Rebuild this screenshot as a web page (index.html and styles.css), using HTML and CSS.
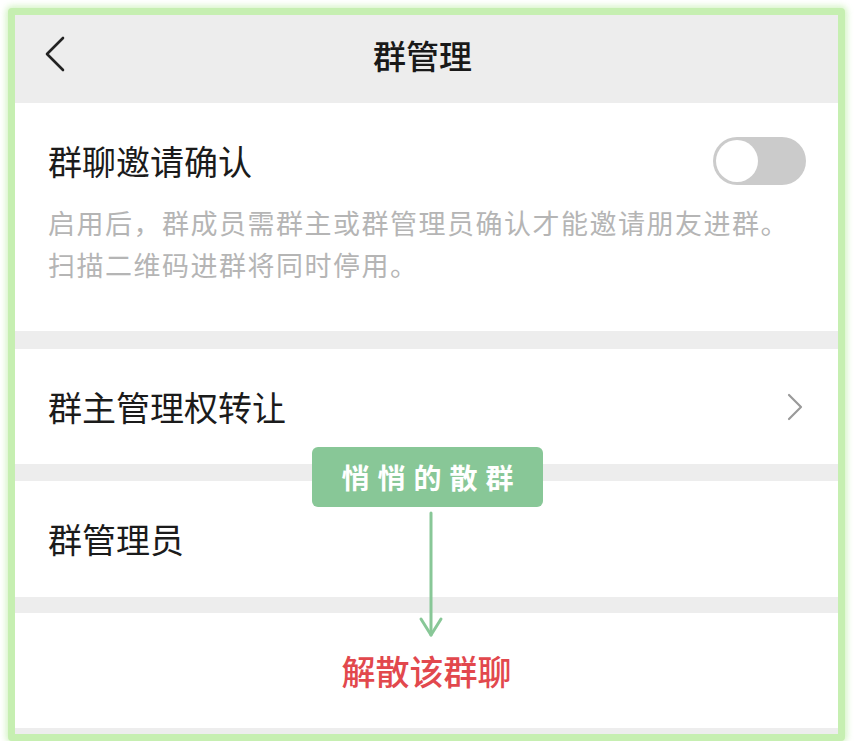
FILE: index.html
```html
<!DOCTYPE html>
<html lang="zh-CN">
<head>
    <meta charset="UTF-8">
    <meta name="viewport" content="width=device-width, initial-scale=1.0">
    <title>群管理</title>
    <link rel="stylesheet" href="styles.css">
</head>
<body>
    <div class="frame">
        <div class="header">
            <svg class="back" width="22" height="36" viewBox="0 0 22 36">
                <path d="M19 2 L3 18 L19 34" fill="none" stroke="#222" stroke-width="2.6" stroke-linecap="round" stroke-linejoin="round"/>
            </svg>
            <h1>群管理</h1>
        </div>

        <div class="section">
            <div class="switch-row">
                <span class="label">群聊邀请确认</span>
                <div class="toggle"><div class="knob"></div></div>
            </div>
            <p class="desc">启用后，群成员需群主或群管理员确认才能邀请朋友进群。<br>扫描二维码进群将同时停用。</p>
        </div>

        <div class="gap gap-1"></div>
        <div class="row">
            <span class="label">群主管理权转让</span>
            <svg class="chevron" width="16" height="28" viewBox="0 0 16 28">
                <path d="M2 2 L14 14 L2 26" fill="none" stroke="#9a9a9a" stroke-width="2.2" stroke-linecap="round" stroke-linejoin="round"/>
            </svg>
        </div>
        <div class="gap gap-2"></div>
        <div class="row row-tall">
            <span class="label">群管理员</span>
        </div>
        <div class="gap gap-3"></div>
        <div class="row danger-row">
            <span class="danger">解散该群聊</span>
        </div>
        <div class="gap gap-4"></div>

        <!-- 注释标签 -->
        <div class="badge">悄悄的散群</div>
        <svg class="pointer" width="30" height="130" viewBox="0 0 30 130">
            <path d="M15 2 L15 124" stroke="#88c797" stroke-width="3" stroke-linecap="round"/>
            <path d="M5 108 L15 124 L25 108" fill="none" stroke="#88c797" stroke-width="3" stroke-linecap="round" stroke-linejoin="round"/>
        </svg>
    </div>
</body>
</html>
```

FILE: styles.css
```css
body {
    margin: 0;
    background-color: #ffffff;
    font-family: 'Noto Sans CJK SC', 'Noto Sans', sans-serif;
}
.frame {
    position: relative;
    margin: 8px 0 0 8px;
    width: 823px;
    height: 719px;
    border: 7px solid #c6efb1;
    border-radius: 4px;
    box-shadow: 0 0 6px 2px rgba(200, 240, 180, 0.8);
    background-color: #ededed;
    display: flex;
    flex-direction: column;
}
.header {
    height: 88px;
    background-color: #ededed;
    display: flex;
    align-items: center;
    justify-content: center;
    position: relative;
}
.back {
    position: absolute;
    left: 29px;
    top: 21px;
}
h1 {
    margin: 0 8px 8px 0;
    font-size: 33px;
    font-weight: 500;
    color: #191919;
    line-height: 1;
}
.section {
    height: 228px;
    box-sizing: border-box;
    background-color: white;
    padding: 34px 32px 0 33px;
}
.switch-row {
    display: flex;
    align-items: center;
    justify-content: space-between;
    height: 48px;
}
.label {
    font-size: 34px;
    color: #1b1b1b;
    line-height: 1;
}
.toggle {
    width: 93px;
    height: 48px;
    border-radius: 24px;
    background-color: #cbcbcb;
    box-sizing: border-box;
    padding: 3px;
}
.knob {
    width: 42px;
    height: 42px;
    border-radius: 50%;
    background-color: white;
}
.desc {
    margin: 17px 0 0 0;
    font-size: 27px;
    line-height: 42px;
    letter-spacing: 1.5px;
    color: #b5b5b5;
}
.gap {
    background-color: #ededed;
}
.gap-1 { height: 18px; }
.gap-2 { height: 17px; }
.gap-3 { height: 16px; }
.gap-4 { height: 6px; }
.row {
    height: 115px;
    background-color: white;
    display: flex;
    align-items: center;
    justify-content: space-between;
    padding: 0 35px 0 33px;
}
.row-tall {
    height: 116px;
}
.danger-row {
    justify-content: center;
    padding: 0;
}
.danger {
    font-size: 34px;
    font-weight: 500;
    color: #e2484d;
    line-height: 1;
}
.badge {
    position: absolute;
    left: 297px;
    top: 432px;
    width: 231px;
    height: 60px;
    border-radius: 6px;
    background-color: #88c797;
    color: white;
    font-size: 28px;
    font-weight: 700;
    letter-spacing: 8px;
    text-indent: 8px;
    display: flex;
    align-items: center;
    justify-content: center;
}
.pointer {
    position: absolute;
    left: 401px;
    top: 496px;
}
```
